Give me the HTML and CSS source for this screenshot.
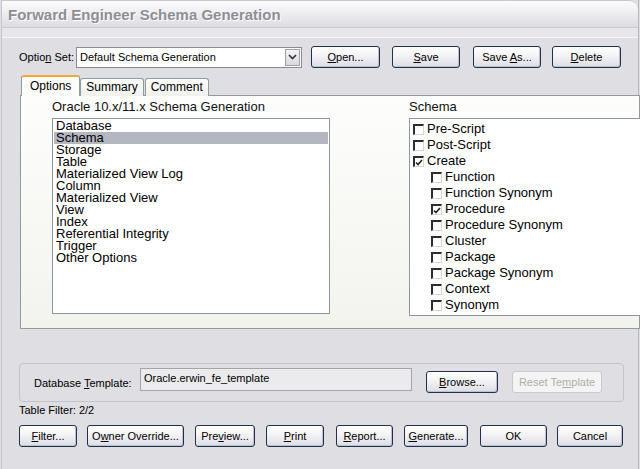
FILE: index.html
```html
<!DOCTYPE html>
<html lang="en">
<head>
    <meta charset="UTF-8">
    <title>Forward Engineer Schema Generation</title>
    <link rel="stylesheet" href="styles.css">
</head>
<body>
    <div class="window">
        <div class="title-bar">Forward Engineer Schema Generation</div>
        <div class="menu-band"></div>
        <div class="dialog">
            <div class="option-row">
                <span class="option-label">Optio<u>n</u> Set:</span>
                <div class="combo">
                    <span class="combo-text">Default Schema Generation</span>
                    <span class="combo-btn">
                        <svg width="9" height="6" viewBox="0 0 9 6"><path d="M1 1 L4.5 4.5 L8 1" fill="none" stroke="#333" stroke-width="1.6"/></svg>
                    </span>
                </div>
                <button class="btn btn-open"><u>O</u>pen...</button>
                <button class="btn btn-save"><u>S</u>ave</button>
                <button class="btn btn-saveas">Save <u>A</u>s...</button>
                <button class="btn btn-delete"><u>D</u>elete</button>
            </div>

            <div class="tabs">
                <div class="tab active">Options</div>
                <div class="tab">Summary</div>
                <div class="tab">Comment</div>
            </div>
            <div class="tab-panel">
                <div class="col col-left">
                    <div class="col-label">Oracle 10.x/11.x Schema Generation</div>
                    <div class="listbox">
                        <div class="item">Database</div>
                        <div class="item selected">Schema</div>
                        <div class="item">Storage</div>
                        <div class="item">Table</div>
                        <div class="item">Materialized View Log</div>
                        <div class="item">Column</div>
                        <div class="item">Materialized View</div>
                        <div class="item">View</div>
                        <div class="item">Index</div>
                        <div class="item">Referential Integrity</div>
                        <div class="item">Trigger</div>
                        <div class="item">Other Options</div>
                    </div>
                </div>
                <div class="col col-right">
                    <div class="col-label">Schema</div>
                    <div class="checklist">
                        <div class="check-item"><span class="box"></span>Pre-Script</div>
                        <div class="check-item"><span class="box"></span>Post-Script</div>
                        <div class="check-item"><span class="box checked"><svg width="8" height="7" viewBox="0 0 8 7"><path d="M1 3.5 L3 5.5 L7 1" fill="none" stroke="#222" stroke-width="1.6"/></svg></span>Create</div>
                        <div class="check-item sub"><span class="box"></span>Function</div>
                        <div class="check-item sub"><span class="box"></span>Function Synonym</div>
                        <div class="check-item sub"><span class="box checked"><svg width="8" height="7" viewBox="0 0 8 7"><path d="M1 3.5 L3 5.5 L7 1" fill="none" stroke="#222" stroke-width="1.6"/></svg></span>Procedure</div>
                        <div class="check-item sub"><span class="box"></span>Procedure Synonym</div>
                        <div class="check-item sub"><span class="box"></span>Cluster</div>
                        <div class="check-item sub"><span class="box"></span>Package</div>
                        <div class="check-item sub"><span class="box"></span>Package Synonym</div>
                        <div class="check-item sub"><span class="box"></span>Context</div>
                        <div class="check-item sub"><span class="box"></span>Synonym</div>
                    </div>
                </div>
            </div>

            <div class="group-box">
                <span class="template-label">Database <u>T</u>emplate:</span>
                <div class="text-field">Oracle.erwin_fe_template</div>
                <button class="btn btn-browse"><u>B</u>rowse...</button>
                <button class="btn btn-reset" disabled>Reset Te<u>m</u>plate</button>
            </div>
            <div class="filter-info">Table Filter: 2/2</div>

            <div class="button-row">
                <button class="btn b-filter"><u>F</u>ilter...</button>
                <button class="btn b-owner">O<u>w</u>ner Override...</button>
                <button class="btn b-preview">Pre<u>v</u>iew...</button>
                <button class="btn b-print"><u>P</u>rint</button>
                <button class="btn b-report"><u>R</u>eport...</button>
                <button class="btn b-generate"><u>G</u>enerate...</button>
                <button class="btn b-ok">OK</button>
                <button class="btn b-cancel">Cancel</button>
            </div>
        </div>
    </div>
</body>
</html>
```

FILE: styles.css
```css
body, html {
    margin: 0;
    width: 640px;
    height: 469px;
    overflow: hidden;
    font-family: "Liberation Sans", Arial, sans-serif;
    font-size: 11px;
    color: #000;
    background-color: #dedee3;
}
.window {
    height: 469px;
    border-left: 1px solid #c6c6cc;
    border-right: 1px solid #b8b8c0;
    margin-left: 1px;
    width: 638px;
    box-sizing: border-box;
}
.title-bar {
    height: 28px;
    box-sizing: border-box;
    padding: 5px 0 0 6px;
    font-size: 15px;
    font-weight: bold;
    color: #8e8e96;
    text-shadow: 1px 1px 0 #fff;
    background: linear-gradient(#fbfbfc, #f0f0f2 40%, #dcdce2);
    border-top: 1px solid #c8c8ce;
    border-top-right-radius: 9px;
    border-bottom: 1px solid #cacad0;
}
.menu-band {
    height: 9px;
    background-color: #e7e7eb;
    border-bottom: 1px solid #f6f6f8;
}
.dialog {
    padding: 8px 0 0 17px;
}

/* option set row */
.option-row {
    display: flex;
    align-items: center;
    height: 22px;
}
.option-label {
    width: 57px;
}
.combo {
    width: 226px;
    height: 21px;
    box-sizing: border-box;
    border: 1px solid #8a8a90;
    background: #fff;
    display: flex;
    align-items: center;
    justify-content: space-between;
}
.combo-text {
    padding-left: 3px;
}
.combo-btn {
    width: 15px;
    height: 17px;
    margin-right: 1px;
    box-sizing: border-box;
    border: 1px solid #a0a0a8;
    background: linear-gradient(#f4f4f6, #d8d8de);
    display: flex;
    align-items: center;
    justify-content: center;
}
.btn {
    font-family: "Liberation Sans", Arial, sans-serif;
    font-size: 11px;
    color: #000;
    height: 22px;
    padding: 0;
    border: 1px solid #1f3150;
    border-radius: 3px;
    background: linear-gradient(#ffffff, #f3f3f5 45%, #dcdce4);
    box-shadow: inset -1px -1px 0 #c0c0cc;
}
.btn-open { width: 69px; margin-left: 9px; }
.btn-save { width: 68px; margin-left: 12px; }
.btn-saveas { width: 68px; margin-left: 13px; }
.btn-delete { width: 69px; margin-left: 11px; }

/* tabs */
.tabs {
    display: flex;
    align-items: flex-end;
    height: 20px;
    margin-top: 8px;
    margin-left: 2px;
    position: relative;
    z-index: 1;
    margin-bottom: -1px;
}
.tab {
    font-size: 12px;
    height: 17px;
    line-height: 17px;
    padding: 0 5px;
    border: 1px solid #919b9c;
    border-bottom: none;
    border-radius: 3px 3px 0 0;
    background: linear-gradient(#ffffff, #f0f0ec);
    margin-right: 1px;
}
.tab.active {
    height: 19px;
    line-height: 19px;
    padding: 0 8px;
    border-top: 2px solid #f2a93c;
    background: #fcfcfb;
    margin-right: 0;
}

.tab-panel {
    display: flex;
    margin-left: 1px;
    width: 620px;
    height: 234px;
    box-sizing: border-box;
    border: 1px solid #919b9c;
    background: linear-gradient(#fdfdfc, #f3f3ee);
    padding: 4px 0 0 31px;
}
.col {
    flex-shrink: 0;
}
.col-label {
    font-size: 13px;
    line-height: 14px;
    margin-bottom: 4px;
    color: #111;
}
.col-left {
    width: 357px;
}
.listbox {
    width: 278px;
    height: 196px;
    box-sizing: border-box;
    border: 1px solid #8a96a4;
    background: #fff;
    padding: 1px 1px 0 1px;
}
.item {
    font-size: 13px;
    line-height: 12px;
    padding-left: 2px;
}
.item.selected {
    background-color: #b4b6c0;
}
.checklist {
    width: 240px;
    height: 198px;
    overflow: hidden;
    box-sizing: border-box;
    border: 1px solid #8a96a4;
    background: #fff;
    padding: 1px 0 0 3px;
}
.check-item {
    display: flex;
    align-items: center;
    font-size: 13px;
    height: 16px;
}
.check-item.sub {
    padding-left: 18px;
}
.box {
    width: 8px;
    height: 8px;
    margin: 3px 3px 0 0;
    border-top: 2px solid #2e2e2e;
    border-left: 2px solid #2e2e2e;
    border-right: 1px solid #d6d6d6;
    border-bottom: 1px solid #d6d6d6;
    display: flex;
    align-items: center;
    justify-content: center;
}

/* template group */
.group-box {
    display: flex;
    align-items: center;
    margin-top: 34px;
    width: 605px;
    height: 39px;
    box-sizing: border-box;
    border: 1px solid #c2c2ca;
    border-radius: 4px;
    padding: 0 0 1px 14px;
}
.template-label {
    width: 106px;
    padding-top: 2px;
}
.text-field {
    width: 272px;
    height: 23px;
    box-sizing: border-box;
    border: 1px solid #a4a4aa;
    background: #ebebee;
    padding: 3px 0 0 3px;
    align-self: flex-start;
    margin-top: 4px;
}
.btn-browse { width: 72px; margin-left: 14px; }
.btn-reset {
    width: 90px;
    margin-left: 14px;
    color: #aeaeae;
    border-color: #c8c8ce;
    background: #f4f4f4;
    box-shadow: none;
}
.filter-info {
    margin-top: 1px;
    height: 14px;
    line-height: 14px;
}

.button-row {
    display: flex;
    margin-top: 8px;
}
.b-filter { width: 58px; }
.b-owner { width: 97px; margin-left: 10px; }
.b-preview { width: 60px; margin-left: 11px; }
.b-print { width: 58px; margin-left: 11px; }
.b-report { width: 57px; margin-left: 12px; }
.b-generate { width: 64px; margin-left: 11px; }
.b-ok { width: 67px; margin-left: 12px; }
.b-cancel { width: 66px; margin-left: 10px; }
```
